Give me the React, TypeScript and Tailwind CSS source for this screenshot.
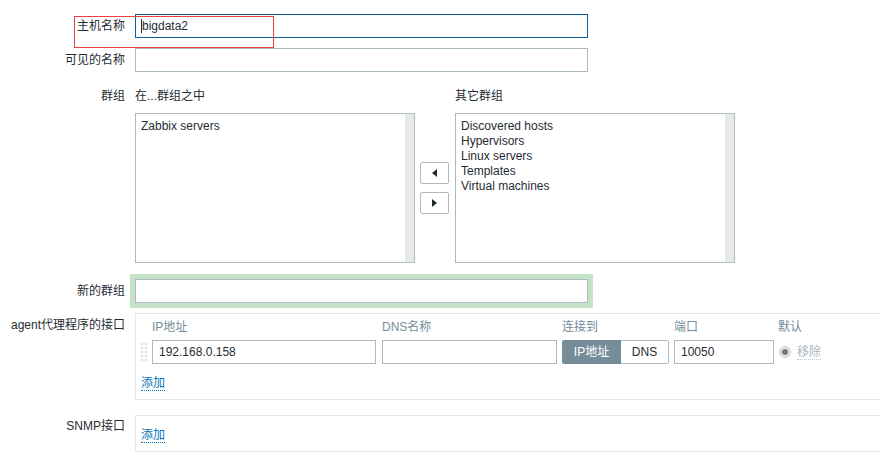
import React from 'react';

const labelCls = 'w-[125px] shrink-0 text-right text-[#1f2c33]';

const ListBox = ({ items }: { items: string[] }) => (
  <div className="flex w-[280px] h-[150px] border border-[#acbbc2] bg-white">
    <div className="flex-1 px-[5px] pt-[5px] leading-[15px] text-[#1f2c33]">
      {items.map((item) => (
        <div key={item}>{item}</div>
      ))}
    </div>
    <div className="w-[9px] bg-[#e8e8e8]" />
  </div>
);

const ArrowButton = ({ dir }: { dir: 'left' | 'right' }) => (
  <div className="flex items-center justify-center w-[29px] h-[22px] border border-[#acbbc2] rounded-[2px] bg-white">
    <svg width="5" height="8" viewBox="0 0 5 8">
      {dir === 'left' ? <polygon points="5,0 5,8 0,4" fill="#1f2c33" /> : <polygon points="0,0 0,8 5,4" fill="#1f2c33" />}
    </svg>
  </div>
);

const DragHandle = () => (
  <svg width="6" height="20" viewBox="0 0 6 20" className="shrink-0">
    {[0, 4, 8, 12, 16].map((y) => (
      <g key={y}>
        <rect x="0" y={y + 1} width="2" height="2" fill="#d8dde0" />
        <rect x="4" y={y + 1} width="2" height="2" fill="#d8dde0" />
      </g>
    ))}
  </svg>
);

const AddLink = () => (
  <span className="text-[#0275b8] border-b border-dotted border-[#0275b8] leading-[14px]">添加</span>
);

const App = () => {
  const otherGroups = ['Discovered hosts', 'Hypervisors', 'Linux servers', 'Templates', 'Virtual machines'];

  return (
    <div className="relative w-[880px] h-[462px] overflow-hidden bg-white text-[12px] text-[#1f2c33] font-['Liberation_Sans','Noto_Sans_CJK_SC',sans-serif]">
      <div className="flex flex-col pt-[14px]">
        {/* host name */}
        <div className="flex items-center h-[24px]">
          <div className={labelCls}>主机名称</div>
          <div className="ml-[10px] flex items-center w-[453px] h-[24px] border border-[#0f5d94] px-[5px]">
            <span className="w-px h-[14px] bg-[#1f2c33]" />
            <span>bigdata2</span>
          </div>
        </div>

        {/* visible name */}
        <div className="flex items-center h-[24px] mt-[10px]">
          <div className={labelCls}>可见的名称</div>
          <div className="ml-[10px] w-[453px] h-[24px] border border-[#acbbc2]" />
        </div>

        {/* groups */}
        <div className="flex items-center h-[18px] mt-[15px]">
          <div className={labelCls}>群组</div>
          <div className="ml-[10px] w-[320px]">在...群组之中</div>
          <div>其它群组</div>
        </div>
        <div className="flex mt-[8px]">
          <div className="w-[135px] shrink-0" />
          <ListBox items={['Zabbix servers']} />
          <div className="ml-[5px] flex flex-col justify-center gap-[8px]">
            <ArrowButton dir="left" />
            <ArrowButton dir="right" />
          </div>
          <div className="ml-[6px]">
            <ListBox items={otherGroups} />
          </div>
        </div>

        {/* new group */}
        <div className="flex items-center h-[24px] mt-[16px]">
          <div className={labelCls}>新的群组</div>
          <div className="ml-[10px] w-[453px] h-[24px] border border-[#acbbc2] shadow-[0_0_0_5px_#c5e3c6]" />
        </div>

        {/* agent interfaces */}
        <div className="flex mt-[10px]">
          <div className={`${labelCls} pt-[3px] leading-[18px]`}>agent代理程序的接口</div>
          <div className="ml-[10px] flex-1 -mr-[4px] h-[87px] border border-[#e5e8ea] pl-[5px] pt-[4px]">
            <div className="flex items-center h-[18px] text-[#768d99]">
              <div className="w-[11px] shrink-0" />
              <div className="w-[224px]">IP地址</div>
              <div className="ml-[6px] w-[175px]">DNS名称</div>
              <div className="ml-[5px] w-[107px]">连接到</div>
              <div className="ml-[5px] w-[100px]">端口</div>
              <div className="ml-[4px]">默认</div>
            </div>
            <div className="flex items-center h-[24px] mt-[4px]">
              <DragHandle />
              <div className="ml-[5px] flex items-center w-[224px] h-[24px] border border-[#acbbc2] px-[6px]">192.168.0.158</div>
              <div className="ml-[6px] w-[175px] h-[24px] border border-[#acbbc2]" />
              <div className="ml-[5px] flex w-[107px] h-[24px] rounded-[2px] overflow-hidden">
                <div className="flex items-center justify-center w-[59px] bg-[#768d99] text-white">IP地址</div>
                <div className="flex items-center justify-center flex-1 border border-l-0 border-[#acbbc2] rounded-r-[2px] text-[#1f2c33]">DNS</div>
              </div>
              <div className="ml-[5px] flex items-center w-[100px] h-[24px] border border-[#acbbc2] px-[6px]">10050</div>
              <div className="ml-[5px] w-[12px] h-[12px] rounded-full bg-[#e4e4e4] border border-[#d0d0d0] flex items-center justify-center">
                <div className="w-[6px] h-[6px] rounded-full bg-[#777]" />
              </div>
              <span className="ml-[6px] text-[#aab5bb] border-b border-dotted border-[#c0c8cc] leading-[14px]">移除</span>
            </div>
            <div className="flex items-center h-[18px] mt-[10px]">
              <AddLink />
            </div>
          </div>
        </div>

        {/* SNMP interfaces */}
        <div className="flex mt-[15px]">
          <div className={`${labelCls} pt-[2px] leading-[18px]`}>SNMP接口</div>
          <div className="ml-[10px] flex-1 -mr-[4px] h-[37px] border border-[#e5e8ea] pl-[5px] pt-[10px]">
            <div className="flex items-center h-[18px]">
              <AddLink />
            </div>
          </div>
        </div>
      </div>

      {/* annotation box */}
      <div className="absolute left-[74px] top-[16px] w-[200px] h-[32px] border border-[#e8413f]" />
    </div>
  );
};

export default App;
